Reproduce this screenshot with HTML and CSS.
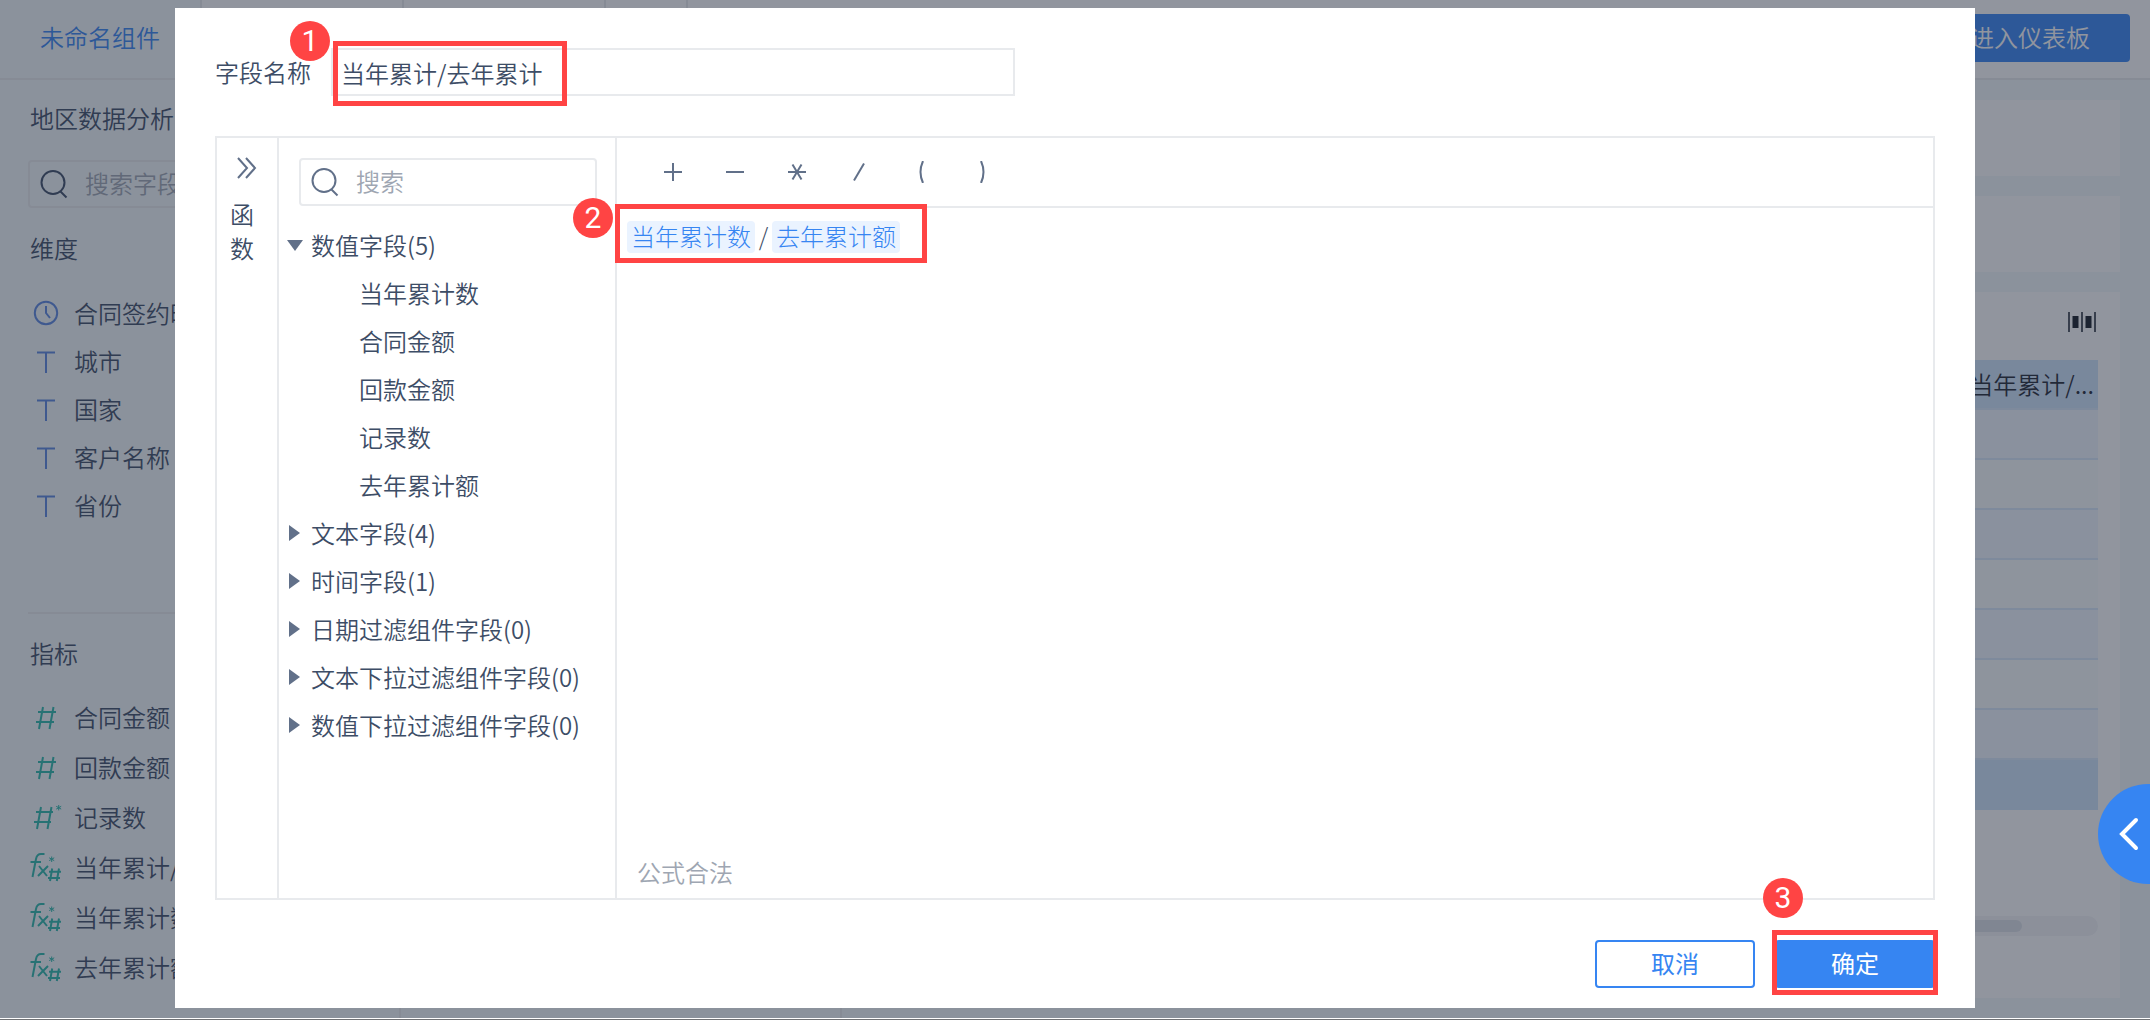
FILE: index.html
```html
<!DOCTYPE html>
<html lang="zh-CN">
<head>
    <meta charset="UTF-8">
    <meta name="viewport" content="width=device-width, initial-scale=1.0">
    <title>未命名组件</title>
    <link rel="stylesheet" href="styles.css">
</head>
<body>
    <!-- Iconos compartidos -->
    <svg class="sprite" aria-hidden="true">
        <symbol id="i-search" viewBox="0 0 28 30"><circle cx="13" cy="13.500" r="11.500"/><path d="M20.500 22.500l6 6"/></symbol>
        <symbol id="i-clock" viewBox="0 0 32 32"><circle cx="16" cy="16" r="11.200"/><path d="M16 9v7l4 5"/></symbol>
        <symbol id="i-text" viewBox="0 0 32 32"><path d="M7 7.500h18M16 7.500V28"/></symbol>
        <symbol id="i-num" viewBox="0 0 32 32"><path d="M13 6L9 28M23.500 6l-4 22M8 11h18M6 21h18"/></symbol>
        <symbol id="i-numstar" viewBox="0 0 32 32"><path d="M11 6L7 28M21.500 6l-4 22M6 11h17M4 21h17"/><path class="thin" d="M28.700 4v5.400M26.200 5.300l5 2.800M31.200 5.300l-5 2.800"/></symbol>
        <symbol id="i-fx" viewBox="0 0 32 32"><path d="M2.500 26L6 8q1-5 5-5h3.500M.500 11H11M9 15l8 10M18 15L8 25"/><path class="thin" d="M21.700 5.500V11M19.200 6.800l5 2.800M24.200 6.800l-5 2.800"/><path d="M22.200 17.500L20 30M29 17.500L26.800 30M19 20.800h12M18 27h12"/></symbol>
    </svg>

    <div class="stage">
        <div class="app">
            <header class="header">
                <h1 class="title">未命名组件</h1>
                <div class="tab"></div>
                <div class="tab"></div>
                <div class="tab tab-add"></div>
                <button type="button" class="btn-enter">进入仪表板</button>
            </header>
            <div class="workspace">
                <aside class="sidebar">
                    <h2>地区数据分析</h2>
                    <div class="search side-search">
                        <svg><use href="#i-search"/></svg>
                        <input type="text" placeholder="搜索字段" aria-label="搜索字段">
                    </div>
                    <h3>维度</h3>
                    <ul class="dims">
                        <li><svg><use href="#i-clock"/></svg>合同签约时间</li>
                        <li><svg><use href="#i-text"/></svg>城市</li>
                        <li><svg><use href="#i-text"/></svg>国家</li>
                        <li><svg><use href="#i-text"/></svg>客户名称</li>
                        <li><svg><use href="#i-text"/></svg>省份</li>
                    </ul>
                    <h3 class="split">指标</h3>
                    <ul class="measures">
                        <li><svg><use href="#i-num"/></svg>合同金额</li>
                        <li><svg><use href="#i-num"/></svg>回款金额</li>
                        <li><svg><use href="#i-numstar"/></svg>记录数</li>
                        <li><svg><use href="#i-fx"/></svg>当年累计/去年累计</li>
                        <li><svg><use href="#i-fx"/></svg>当年累计数</li>
                        <li><svg><use href="#i-fx"/></svg>去年累计额</li>
                    </ul>
                </aside>
                <div class="chart-col"></div>
                <main class="main">
                    <div class="card shelf"></div>
                    <div class="card shelf"></div>
                    <div class="card preview">
                        <svg class="columns-icon" viewBox="0 0 28 20"><path d="M1 0v20M14 0v20M27 0v20"/><path class="bars" d="M7.500 4v12M20.500 4v12"/></svg>
                        <table class="grid">
                            <thead>
                                <tr><th>当年累计/...</th></tr>
                            </thead>
                            <tbody>
                                <tr><td></td></tr>
                                <tr><td></td></tr>
                                <tr><td></td></tr>
                                <tr><td></td></tr>
                                <tr><td></td></tr>
                                <tr><td></td></tr>
                                <tr><td></td></tr>
                            </tbody>
                            <tfoot>
                                <tr><td></td></tr>
                            </tfoot>
                        </table>
                        <div class="scrollbar"><div class="thumb"></div></div>
                    </div>
                </main>
            </div>
        </div>

        <div class="mask">
            <div class="dialog" role="dialog" aria-label="添加计算字段">
                <div class="name-row">
                    <label for="fieldName">字段名称</label>
                    <input type="text" id="fieldName" value="当年累计/去年累计">
                    <span class="mark mark-name"></span>
                    <span class="badge badge-1">1</span>
                </div>

                <div class="editor">
                    <button type="button" class="functions">
                        <svg viewBox="0 0 20 22"><path d="M1 1l9 10-9 10M9 1l9 10-9 10"/></svg>
                        <span>函数</span>
                    </button>
                    <div class="fields">
                        <div class="search">
                            <svg><use href="#i-search"/></svg>
                            <input type="text" placeholder="搜索" aria-label="搜索">
                        </div>
                        <ul class="tree">
                            <li class="group open">数值字段(5)</li>
                            <li class="leaf">当年累计数</li>
                            <li class="leaf">合同金额</li>
                            <li class="leaf">回款金额</li>
                            <li class="leaf">记录数</li>
                            <li class="leaf">去年累计额</li>
                            <li class="group">文本字段(4)</li>
                            <li class="group">时间字段(1)</li>
                            <li class="group">日期过滤组件字段(0)</li>
                            <li class="group">文本下拉过滤组件字段(0)</li>
                            <li class="group">数值下拉过滤组件字段(0)</li>
                        </ul>
                    </div>
                    <div class="formula">
                        <div class="operators">
                            <button type="button" aria-label="加"><svg viewBox="0 0 22 22"><path d="M2 11h18M11 2v18"/></svg></button>
                            <button type="button" aria-label="减"><svg viewBox="0 0 22 22"><path d="M2 11h18"/></svg></button>
                            <button type="button" aria-label="乘"><svg viewBox="0 0 22 22"><path d="M2 11h18M6.500 3.500l9 15M15.500 3.500l-9 15"/></svg></button>
                            <button type="button" aria-label="除"><svg viewBox="0 0 22 22"><path d="M16 2.500L6 19.500"/></svg></button>
                            <button type="button" aria-label="左括号"><svg viewBox="0 0 22 22"><path d="M13 0q-5 11 0 22"/></svg></button>
                            <button type="button" aria-label="右括号"><svg viewBox="0 0 22 22"><path d="M9 0q5 11 0 22"/></svg></button>
                        </div>
                        <div class="code">
                            <span class="chip">当年累计数</span><span class="op">/</span><span class="chip">去年累计额</span>
                            <span class="mark mark-code"></span>
                            <span class="badge badge-2">2</span>
                        </div>
                        <p class="status">公式合法</p>
                    </div>
                </div>

                <div class="actions">
                    <button type="button" class="btn">取消</button>
                    <div class="confirm">
                        <button type="button" class="btn btn-primary">确定</button>
                        <span class="mark mark-ok"></span>
                        <span class="badge badge-3">3</span>
                    </div>
                </div>
            </div>
        </div>

        <button type="button" class="drawer" aria-label="展开">
            <svg viewBox="0 0 20 34"><path d="M17 3L3 17l14 14"/></svg>
        </button>
    </div>
    <div class="page-end"></div>
</body>
</html>
```

FILE: styles.css
```css
* {
    box-sizing: border-box;
}
body {
    margin: 0;
    height: 100vh;
    display: flex;
    flex-direction: column;
    overflow: hidden;
    font-family: "Noto Sans CJK SC", sans-serif;
    font-size: 24px;
    font-weight: 350;
    line-height: 36px;
    color: #3d4d66;
    background: #fff;
}
h1, h2, h3, p, ul {
    margin: 0;
    padding: 0;
    font-size: 24px;
    font-weight: 350;
    list-style: none;
}
button, input {
    font: inherit;
    color: inherit;
}
button {
    padding: 0;
    border: 0;
    background: none;
}
svg {
    flex: none;
    fill: none;
    stroke: currentColor;
    stroke-width: 2;
}
.thin {
    stroke-width: 1;
}
.sprite {
    position: absolute;
    width: 0;
    height: 0;
}
.stage {
    position: relative;
    flex: 1;
    min-height: 0;
}
.page-end {
    height: 2px;
    border-top: 1px solid #fff;
    background: #707275;
}

/* fondo */
.app {
    height: 100%;
    display: flex;
    flex-direction: column;
    background: #f3f8fb;
}
.header {
    display: flex;
    align-items: flex-start;
    height: 80px;
    padding-right: 20px;
    border-bottom: 2px solid #e8eaed;
    background: #fff;
}
.title {
    width: 202px;
    height: 78px;
    padding-left: 40px;
    line-height: 74px;
    color: #3685f2;
    background: #f3f8fb;
    border-right: 2px solid #e8eaed;
}
.tab {
    width: 202px;
    height: 78px;
    border-right: 2px solid #e8eaed;
}
.tab-add {
    width: 82px;
}
.btn-enter {
    margin: 14px 0 0 auto;
    width: 200px;
    height: 48px;
    padding-bottom: 2px;
    border-radius: 4px;
    color: #fff;
    background: #3685f2;
}
.workspace {
    flex: 1;
    min-height: 0;
    display: flex;
}
.sidebar {
    width: 401px;
    padding: 20px 28px 0;
    border-right: 2px solid #e8eaed;
}
.chart-col {
    width: 441px;
    border-right: 2px solid #e8eaed;
}
.search {
    display: flex;
    align-items: center;
    gap: 17px;
    height: 48px;
    padding-left: 10px;
    border: 2px solid #e8eaed;
    border-radius: 4px;
}
.search svg {
    width: 28px;
    height: 30px;
    color: #617089;
}
.search input {
    flex: 1;
    min-width: 0;
    padding: 0 0 2px;
    border: 0;
    outline: 0;
    background: none;
}
.search input::placeholder {
    color: #9ea6b2;
    opacity: 1;
}
.side-search {
    margin: 24px 0 22px;
}
.side-search svg {
    color: #3d4d66;
}
.sidebar h2, .sidebar h3 {
    padding-left: 2px;
}
.sidebar h3 {
    margin-bottom: 23px;
}
.sidebar li {
    display: flex;
    align-items: center;
    gap: 12px;
    padding-left: 2px;
    line-height: 32px;
    white-space: nowrap;
}
.sidebar li svg {
    width: 32px;
    height: 32px;
}
.dims li {
    height: 48px;
}
.dims svg {
    color: #5a87e0;
}
.measures li {
    height: 50px;
}
.measures svg {
    color: #2bb8aa;
}
.sidebar .split {
    margin: 83px 0 21px;
    padding-top: 21px;
    border-top: 2px solid #e8eaed;
}
.main {
    flex: 1;
    display: flex;
    flex-direction: column;
    gap: 20px;
    padding: 20px 30px 20px 20px;
}
.card {
    background: #fff;
}
.shelf {
    height: 76px;
}
.preview {
    flex: 1;
    display: flex;
    flex-direction: column;
    padding: 20px 22px 0;
}
.columns-icon {
    align-self: flex-end;
    width: 28px;
    height: 20px;
    margin: 0 2px 28px;
    color: #4c525c;
}
.bars {
    stroke: #141a24;
    stroke-width: 6;
}
.grid {
    width: 100%;
    border-spacing: 0;
}
.grid th, .grid td {
    height: 50px;
    padding: 0 4px;
    font-weight: 350;
    text-align: right;
    color: #1f2733;
    border-bottom: 2px solid #d9e9fb;
}
.grid th, .grid tfoot td {
    background: #cfe4fb;
}
.grid tbody tr:nth-child(odd) {
    background: #f0f6ff;
}
.grid tbody tr:nth-child(even) {
    background: #f8fdfd;
}
.grid tfoot td {
    border-bottom: 0;
}
.scrollbar {
    margin-top: auto;
    margin-bottom: 62px;
    padding: 4px;
    border-radius: 10px;
    background: #f4f5f7;
}
.thumb {
    width: 94%;
    height: 12px;
    border-radius: 6px;
    background: #dde1e6;
}

/* ventana */
.mask {
    position: absolute;
    inset: 0;
    padding: 8px 175px 10px;
    background: rgba(35, 43, 61, 0.5);
}
.dialog {
    display: flex;
    flex-direction: column;
    gap: 40px;
    height: 100%;
    padding: 40px 40px 20px;
    background: #fff;
}
.name-row {
    position: relative;
    display: flex;
    align-items: center;
    gap: 20px;
}
.name-row input {
    width: 684px;
    height: 48px;
    padding: 0 8px;
    border: 2px solid #e8eaed;
    outline: 0;
}
.editor {
    flex: 1;
    min-height: 0;
    display: flex;
    border: 2px solid #e8eaed;
}
.functions {
    display: flex;
    flex-direction: column;
    align-items: center;
    gap: 18px;
    width: 62px;
    padding-top: 19px;
    border-right: 2px solid #e8eaed;
    line-height: 34px;
}
.functions svg {
    width: 20px;
    height: 22px;
    color: #617089;
}
.functions span {
    width: 24px;
    margin-right: 10px;
}
.fields {
    width: 338px;
    padding: 20px 18px 0 20px;
    border-right: 2px solid #e8eaed;
}
.tree {
    margin-top: 15px;
    line-height: 48px;
    white-space: nowrap;
}
.group {
    display: flex;
    align-items: center;
    margin-left: -14px;
}
.group::before {
    content: "";
    width: 0;
    margin: 0 11px 0 4px;
    border: solid transparent;
    border-width: 8px 0 8px 11px;
    border-left-color: #617089;
}
.open::before {
    margin: 0 8px 0 2px;
    border-width: 11px 8px 0;
    border-top-color: #617089;
    border-left-color: transparent;
}
.leaf {
    padding-left: 60px;
}
.formula {
    flex: 1;
    display: flex;
    flex-direction: column;
}
.operators {
    display: flex;
    gap: 40px;
    height: 70px;
    padding-left: 45px;
    border-bottom: 2px solid #e8eaed;
}
.operators button {
    display: flex;
    align-items: center;
    color: #617089;
}
.operators svg {
    width: 22px;
    height: 22px;
}
.code {
    position: relative;
    flex: 1;
    display: flex;
    align-items: flex-start;
    padding: 13px 10px;
    font-weight: 300;
    line-height: 30px;
}
.chip {
    height: 32px;
    padding: 0 4px;
    border-radius: 4px;
    color: #3685f2;
    background: #eaf3ff;
}
.op {
    width: 17px;
    text-align: center;
}
.status {
    padding: 0 20px 8px;
    color: #9ea6b2;
}
.actions {
    display: flex;
    justify-content: flex-end;
    gap: 20px;
}
.btn {
    width: 160px;
    height: 48px;
    padding-bottom: 2px;
    border: 2px solid #3685f2;
    border-radius: 4px;
    font-weight: 400;
    color: #3685f2;
}
.btn-primary {
    color: #fff;
    background: #3685f2;
}
.confirm {
    position: relative;
}

/* pasos numerados */
.mark {
    position: absolute;
    border: 5px solid #ff4444;
    pointer-events: none;
}
.mark-name {
    left: 118px;
    top: -7px;
    width: 234px;
    height: 65px;
}
.mark-code {
    left: -2px;
    top: -4px;
    width: 312px;
    height: 59px;
}
.mark-ok {
    left: -3px;
    top: -10px;
    width: 166px;
    height: 65px;
}
.badge {
    position: absolute;
    width: 40px;
    height: 40px;
    border-radius: 50%;
    font: 30px/40px Roboto, sans-serif;
    text-align: center;
    color: #fff;
    background: #ff4444;
}
.badge-1 {
    left: 75px;
    top: -27px;
}
.badge-2 {
    left: -44px;
    top: -10px;
}
.badge-3 {
    left: -12px;
    top: -62px;
}
.drawer {
    position: absolute;
    right: 0;
    top: 784px;
    width: 52px;
    height: 100px;
    padding-left: 12px;
    border-radius: 50px 0 0 50px;
    color: #fff;
    background: #3685f2;
}
.drawer svg {
    display: block;
    width: 20px;
    height: 34px;
    margin-left: 9px;
    stroke-width: 4;
    stroke-linecap: round;
}
```
